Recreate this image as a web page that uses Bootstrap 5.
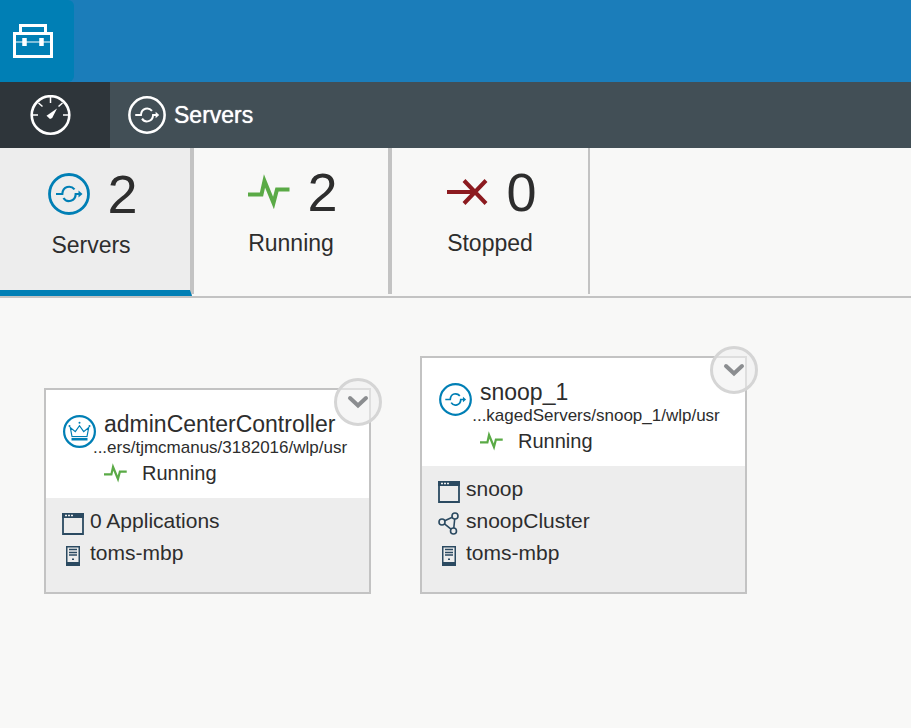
<!DOCTYPE html>
<html lang="en">
<head>
<meta charset="utf-8">
<meta name="viewport" content="width=device-width, initial-scale=1">
<title>Servers</title>
<link href="https://cdn.jsdelivr.net/npm/bootstrap@5.3.0/dist/css/bootstrap.min.css" rel="stylesheet">
<style>
  body { font-family: "Liberation Sans", Arial, sans-serif; background: #f8f8f7; color: #2d2d2d; }
  svg { display: block; flex: none; }
  .topbar { background: #1b7dba; height: 82px; }
  .toolbox { background: #007fb5; width: 74px; border-radius: 0 6px 6px 0; padding-left: 13px; }
  .crumbs { background: #424f56; height: 66px; color: #fff; }
  .dash { background: #2e353a; width: 110px; padding-left: 30px; }
  .crumb-current { padding-left: 18px; }
  .crumb-title { font-size: 23px; line-height: 30px; text-shadow: 0 0 1px #fff; }
  .filters { border-bottom: 2px solid #c3c3c3; height: 150px; }
  .filter { width: 198px; height: 146px; border: solid #c3c3c3; border-width: 0 2px; background: transparent; color: inherit; padding: 12px 0 0; }
  .filter.active { width: 192px; height: 148px; background: #ededed; border-left: 0; border-bottom: 6px solid #007fb5; padding: 14px 8px 0 0; }
  .filter-last { width: 200px; }
  .count { font-size: 54px; line-height: 64px; }
  .label-text { font-size: 23px; line-height: 30px; margin-top: 4px; }
  .figure-row { gap: 17px; padding-left: 4px; }
  .blue { color: #007fb5; }
  .green { color: #5aaa46; }
  .red { color: #8c1a1f; }
  .cards { padding: 58px 44px; gap: 49px; }
  .server { width: 327px; border: 2px solid #c3c3c3; background: #ededed; }
  .server-head { background: #fff; padding: 21px 0 11px 17px; }
  .server-icon { margin-top: 4px; }
  .server-name { font-size: 23px; line-height: 26px; margin: 0; padding-left: 8px; font-weight: 400; }
  .server-path { font-size: 17px; line-height: 22px; width: 256px; margin-left: -4px; }
  .status { font-size: 20px; line-height: 28px; gap: 15px; padding-left: 8px; }
  .server-meta { padding: 8px 16px 22px; font-size: 21px; line-height: 30px; }
  .server-meta li { height: 32px; gap: 6px; }
  .meta-icon { color: #2b4a61; }
  .menu-btn { top: -12px; right: -13px; width: 48px; height: 48px; border: 3px solid #d5d5d5; background: rgba(240, 240, 240, .6); color: #8b8d90; }
</style>
</head>
<body>
<svg width="0" height="0" class="position-absolute" aria-hidden="true">
  <symbol id="i-server" viewBox="0 0 42 42">
    <g fill="none" stroke="currentColor">
      <circle cx="21" cy="21" r="19.5" stroke-width="2.8"/>
      <path d="M8 21h6.300c.5-8 8.500-9 12.200-4.600M15.500 25c3.500 5.500 12 3.200 12.200-4h4" stroke-width="2.200"/>
    </g>
    <path d="M30.500 17.500l4 3.500-4 3.500z" fill="currentColor"/>
  </symbol>
  <symbol id="i-crown" viewBox="0 0 33 33">
    <g fill="none" stroke="currentColor">
      <circle cx="16.500" cy="16.500" r="15.400" stroke-width="2.200"/>
      <path d="M9 21.500L7.300 12.500l5 4.200 4.200-6 4.200 6 5-4.200-1.700 9z" stroke-width="1.200"/>
      <path d="M8.500 24.200h16" stroke-width="2.600"/>
    </g>
    <g fill="currentColor"><circle cx="16.500" cy="7.700" r="1"/><circle cx="6.500" cy="11" r="1"/><circle cx="26.500" cy="11" r="1"/></g>
  </symbol>
  <symbol id="i-pulse" viewBox="0 0 42 36">
    <path d="M0 20.500h13.500L16.500 7l9 22 3.500-13.500h12.500" fill="none" stroke="currentColor" stroke-width="4" stroke-miterlimit="8"/>
  </symbol>
  <symbol id="i-app" viewBox="0 0 22 32">
    <path d="M1 8h20v20H1z" fill="none" stroke="currentColor" stroke-width="1.800"/>
    <path d="M0 7h22v5H0z" fill="currentColor"/>
    <path d="M3 9.500h2m1 0h2m1 0h2" stroke="#ededed" stroke-width="1.500"/>
  </symbol>
  <symbol id="i-host" viewBox="0 0 22 32">
    <path d="M4 8h14v20H4z" fill="currentColor"/>
    <path d="M5.500 9.500h11v14.500h-11z" fill="#ededed"/>
    <path d="M7 11.500h8M7 14.500h8M7 17h8M10 21.300h2" stroke="currentColor" stroke-width="1.400"/>
  </symbol>
  <symbol id="i-cluster" viewBox="0 0 22 32">
    <g fill="none" stroke="currentColor" stroke-width="1.600">
      <circle cx="17" cy="10" r="3"/><circle cx="4" cy="16" r="3"/><circle cx="15.500" cy="25" r="3"/>
      <path d="M6.700 14.800l7.600-3.500M6.500 17.800l6.500 5.300M16.700 13l-.9 9"/>
    </g>
  </symbol>
  <symbol id="i-chevron" viewBox="0 0 22 14">
    <path d="M3 3l8 7.500L19 3" fill="none" stroke="currentColor" stroke-width="4" stroke-linecap="round"/>
  </symbol>
</svg>

<header>
  <div class="topbar d-flex">
    <a href="#" class="toolbox d-flex align-items-center" aria-label="Toolbox">
      <svg width="40" height="34" viewBox="0 0 40 34" fill="none" stroke="#fff">
        <path d="M1.500 9.500h37v23h-37z" stroke-width="3"/>
        <path d="M7.500 9V1.500h25V9" stroke-width="3"/>
        <path d="M2 18h36" stroke-width="1.200"/>
        <path d="M11.500 14v8M28.500 14v8" stroke-width="4.500"/>
      </svg>
    </a>
  </div>
  <nav class="crumbs d-flex" aria-label="Breadcrumb">
    <a href="#" class="dash d-flex align-items-center" aria-label="Dashboard">
      <svg width="41" height="41" viewBox="0 0 41 41" fill="none" stroke="#fff">
        <circle cx="20.500" cy="20" r="18.800" stroke-width="2.600"/>
        <path d="M20.500 2v6M3 20h5M33 20h5M8.500 8l4 3.500M32.500 8l-4 3.500" stroke-width="1.500"/>
        <path d="M27 13.500l-4.800 9.500-2.200 1-3.500-3.200z" fill="#fff" stroke="none"/>
      </svg>
    </a>
    <div class="crumb-current d-flex align-items-center gap-2">
      <svg width="38" height="38"><use href="#i-server"/></svg>
      <span class="crumb-title">Servers</span>
    </div>
  </nav>
</header>

<main>
  <div class="filters d-flex align-items-start">
    <button type="button" class="filter active d-flex flex-column align-items-center">
      <span class="figure-row d-flex align-items-center"><svg class="blue" width="42" height="42"><use href="#i-server"/></svg><span class="count">2</span></span>
      <span class="label-text">Servers</span>
    </button>
    <button type="button" class="filter d-flex flex-column align-items-center">
      <span class="figure-row d-flex align-items-center"><svg class="green" width="42" height="36"><use href="#i-pulse"/></svg><span class="count">2</span></span>
      <span class="label-text">Running</span>
    </button>
    <button type="button" class="filter filter-last d-flex flex-column align-items-center">
      <span class="figure-row d-flex align-items-center">
        <svg class="red" width="42" height="28" viewBox="0 0 42 28"><path d="M0 14h28M17 2.500l22 23M39 2.500l-22 23" fill="none" stroke="currentColor" stroke-width="4"/></svg>
        <span class="count">0</span></span>
      <span class="label-text">Stopped</span>
    </button>
  </div>

  <div class="cards d-flex flex-wrap align-items-end">
    <article class="server position-relative">
      <div class="server-head d-flex">
        <svg class="server-icon blue" width="33" height="33"><use href="#i-crown"/></svg>
        <div>
          <h2 class="server-name">adminCenterController</h2>
          <div class="server-path text-center">...ers/tjmcmanus/3182016/wlp/usr</div>
          <div class="status d-flex align-items-center"><svg class="green" width="23" height="20"><use href="#i-pulse"/></svg>Running</div>
        </div>
      </div>
      <ul class="server-meta list-unstyled mb-0">
        <li class="d-flex"><svg class="meta-icon" width="22" height="32"><use href="#i-app"/></svg>0 Applications</li>
        <li class="d-flex"><svg class="meta-icon" width="22" height="32"><use href="#i-host"/></svg>toms-mbp</li>
      </ul>
      <button type="button" class="menu-btn position-absolute rounded-circle p-0 d-flex align-items-center justify-content-center" aria-label="Actions for adminCenterController"><svg width="22" height="14"><use href="#i-chevron"/></svg></button>
    </article>

    <article class="server position-relative">
      <div class="server-head d-flex">
        <svg class="server-icon blue" width="33" height="33"><use href="#i-server"/></svg>
        <div>
          <h2 class="server-name">snoop_1</h2>
          <div class="server-path text-center">...kagedServers/snoop_1/wlp/usr</div>
          <div class="status d-flex align-items-center"><svg class="green" width="23" height="20"><use href="#i-pulse"/></svg>Running</div>
        </div>
      </div>
      <ul class="server-meta list-unstyled mb-0">
        <li class="d-flex"><svg class="meta-icon" width="22" height="32"><use href="#i-app"/></svg>snoop</li>
        <li class="d-flex"><svg class="meta-icon" width="22" height="32"><use href="#i-cluster"/></svg>snoopCluster</li>
        <li class="d-flex"><svg class="meta-icon" width="22" height="32"><use href="#i-host"/></svg>toms-mbp</li>
      </ul>
      <button type="button" class="menu-btn position-absolute rounded-circle p-0 d-flex align-items-center justify-content-center" aria-label="Actions for snoop_1"><svg width="22" height="14"><use href="#i-chevron"/></svg></button>
    </article>
  </div>
</main>
<script src="https://cdn.jsdelivr.net/npm/bootstrap@5.3.0/dist/js/bootstrap.bundle.min.js"></script>
</body>
</html>
